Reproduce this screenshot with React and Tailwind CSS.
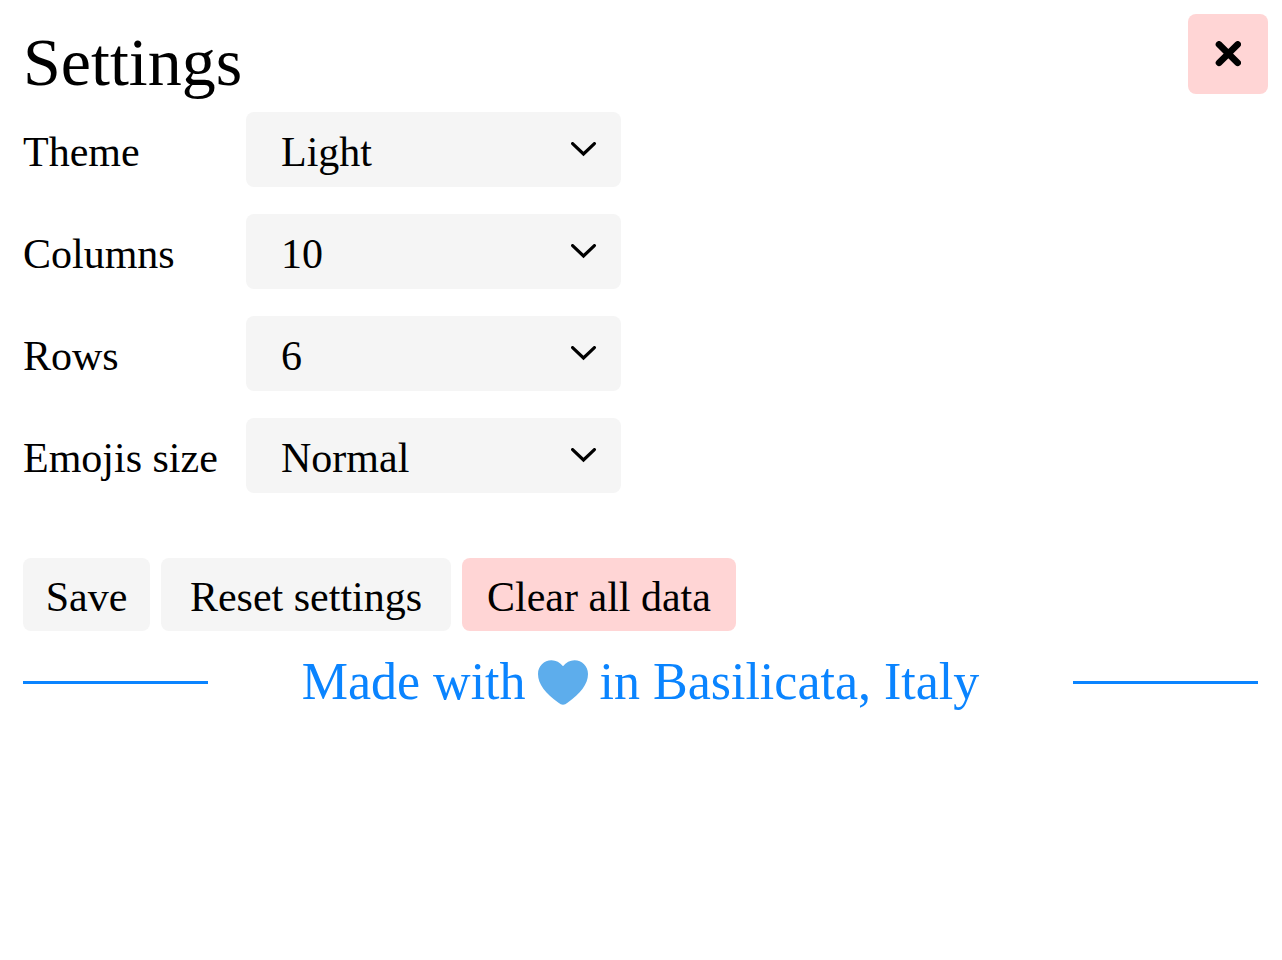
import { useState } from "react";

const fields = [
  { id: "theme", label: "Theme", value: "Light", options: ["Light", "Dark"] },
  { id: "columns", label: "Columns", value: "10", options: ["8", "10", "12"] },
  { id: "rows", label: "Rows", value: "6", options: ["4", "6", "8"] },
  { id: "size", label: "Emojis size", value: "Normal", options: ["Small", "Normal", "Large"] },
];

function Field({ id, label, value, options }) {
  const [current, setCurrent] = useState(value);
  return (
    <div className="flex items-center">
      <label htmlFor={id} className="w-[223px] shrink-0 pt-1">
        {label}
      </label>
      <div className="grid w-full max-w-[375px] items-center">
        <select
          id={id}
          value={current}
          onChange={(e) => setCurrent(e.target.value)}
          className="col-start-1 row-start-1 h-[75px] w-full appearance-none rounded-lg bg-[#f5f5f5] pt-1 pr-16 pl-[35px]"
        >
          {options.map((o) => (
            <option key={o}>{o}</option>
          ))}
        </select>
        <svg
          viewBox="0 0 26 15"
          className="pointer-events-none col-start-1 row-start-1 mr-6 h-[15px] w-[26px] justify-self-end"
          fill="none"
          stroke="#000"
          strokeWidth="3.2"
          strokeLinecap="round"
          aria-hidden="true"
        >
          <path d="M1.6 1.6 L12.5 12 L23.4 1.6" />
        </svg>
      </div>
    </div>
  );
}

export default function App() {
  return (
    <div className="min-h-screen bg-white font-['Liberation_Serif',serif] text-[42px] leading-[48px] text-black">
      <header className="flex items-start justify-between pt-3.5 pr-3.5 pl-[23px]">
        <h1 className="pt-2 text-[68px] leading-[80px]">Settings</h1>
        <button
          type="button"
          aria-label="Close"
          className="flex size-20 items-center justify-center rounded-lg bg-[#ffd5d5]"
        >
          <svg
            viewBox="0 0 26 26"
            className="size-[26px]"
            fill="none"
            stroke="#000"
            strokeWidth="6.6"
            strokeLinecap="round"
            aria-hidden="true"
          >
            <path d="M4 3.4 L22.7 21.8 M22.7 3.4 L4 21.8" />
          </svg>
        </button>
      </header>
      <main className="pt-2.5 pr-6 pl-[23px]">
        <form onSubmit={(e) => e.preventDefault()}>
          <div className="flex flex-col gap-[27px]">
            {fields.map((f) => (
              <Field key={f.id} {...f} />
            ))}
          </div>
          <div className="flex flex-wrap gap-[11px] pt-[65px]">
            <button type="submit" className="h-[73px] min-w-[127px] rounded-lg bg-[#f5f5f5] px-5 pt-1">
              Save
            </button>
            <button type="reset" className="h-[73px] min-w-[290px] rounded-lg bg-[#f5f5f5] px-5 pt-1">
              Reset settings
            </button>
            <button type="button" className="h-[73px] min-w-[274px] rounded-lg bg-[#ffd5d5] px-5 pt-1">
              Clear all data
            </button>
          </div>
        </form>
        <footer className="flex items-center justify-between pt-5 text-[52px] leading-[62px] text-[#0a84ff]">
          <span className="h-[3px] w-[15%] bg-[#0a84ff]" />
          <p className="flex items-center gap-3">
            <span>Made with</span>
            <svg viewBox="0 0 50 45" className="h-[45px] w-[50px]" fill="#5dadec" role="img" aria-label="love">
              <path d="M25 6.3 C22 2.3 18 0.3 13.5 0.3 C6 0.3 0 6.2 0 14 C0 24 7.5 33.5 20.5 42.8 Q25 46.6 29.5 42.8 C42.5 33.5 50 24 50 14 C50 6.2 44 0.3 36.5 0.3 C32 0.3 28 2.3 25 6.3 Z" />
            </svg>
            <span>in Basilicata, Italy</span>
          </p>
          <span className="h-[3px] w-[15%] bg-[#0a84ff]" />
        </footer>
      </main>
    </div>
  );
}
